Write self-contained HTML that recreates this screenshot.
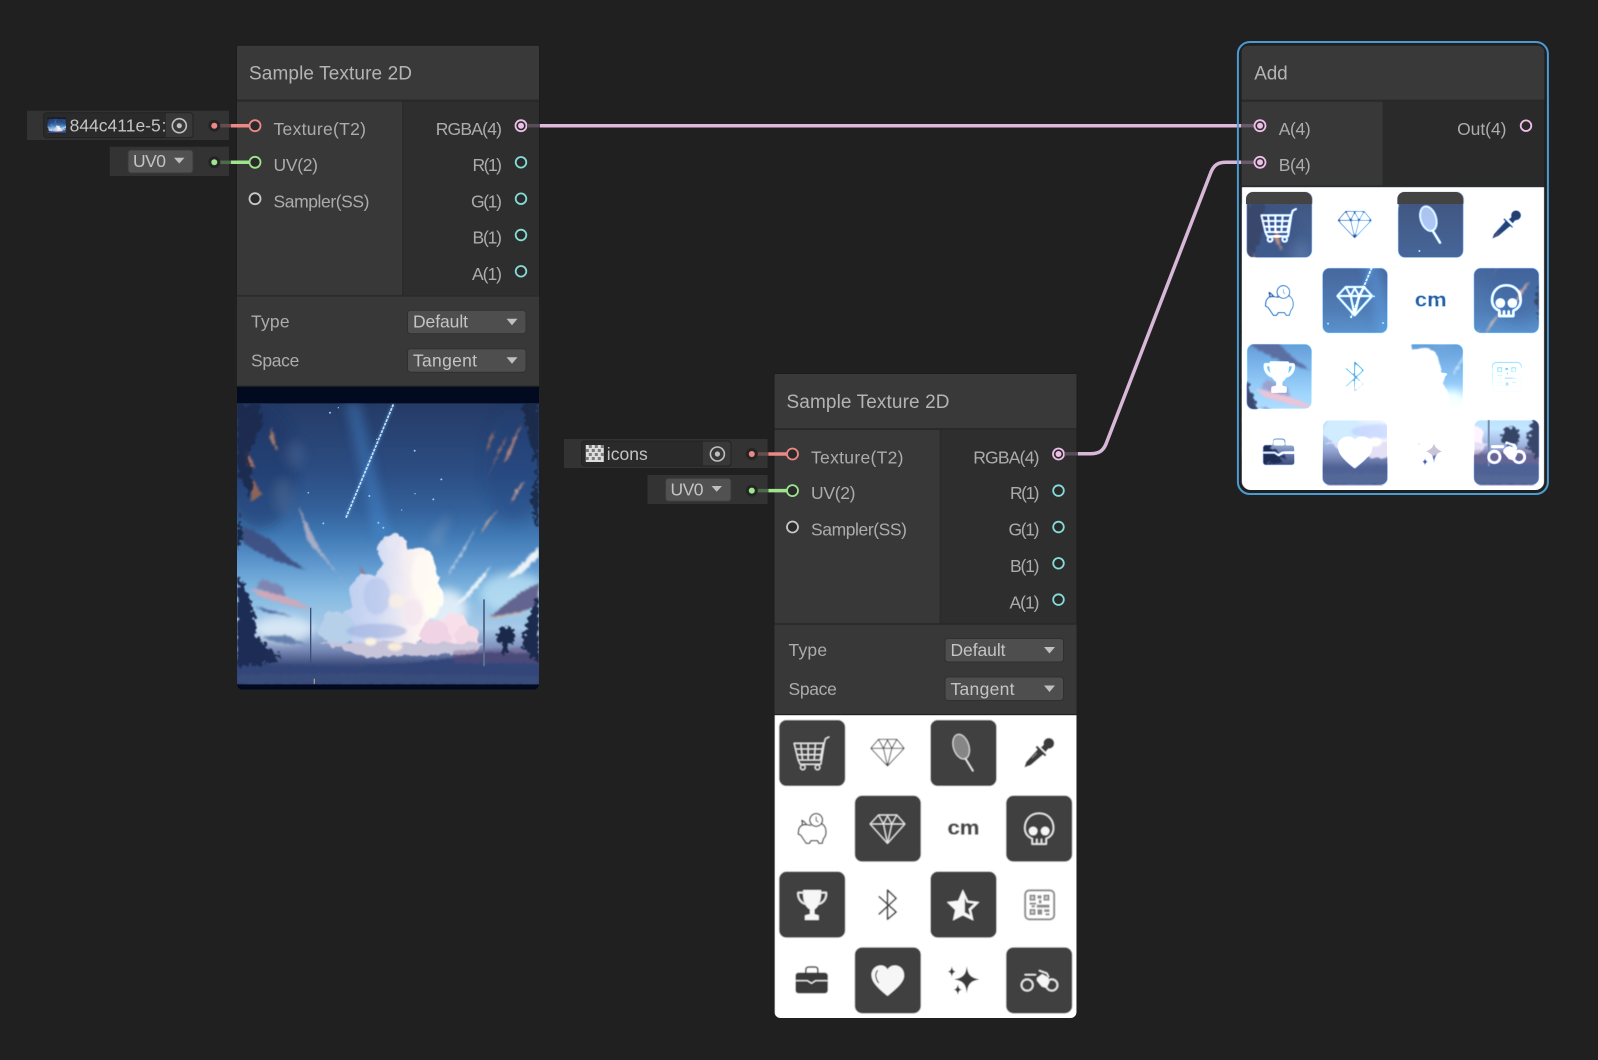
<!DOCTYPE html>
<html><head><meta charset="utf-8"><title>Shader Graph</title>
<style>
html,body{margin:0;padding:0;background:#202020;width:1598px;height:1060px;overflow:hidden}
svg{display:block}
text{font-family:"Liberation Sans",sans-serif;font-size:17.5px;fill:#acacac}
.t{font-size:19px;fill:#b4b4b4}
.v{fill:#c4c4c4}
.ik{fill:none;stroke:var(--ink);stroke-width:calc(4px*var(--k));stroke-linejoin:round;stroke-linecap:round}
.ik3{fill:none;stroke:var(--ink);stroke-width:calc(3px*var(--k));stroke-linejoin:round;stroke-linecap:round}
.ik5{fill:none;stroke:var(--ink);stroke-width:calc(5px*var(--k));stroke-linejoin:round;stroke-linecap:round}
.iw{fill:none;stroke:#e8e8e8;stroke-width:4;stroke-linejoin:round;stroke-linecap:round}
.sw{fill:#f6f6f6}
.sk{fill:var(--ink)}
.tile{fill:var(--tile)}
</style></head><body>
<svg width="1598" height="1060" viewBox="0 0 1598 1060" xmlns="http://www.w3.org/2000/svg">
<defs>
<linearGradient id="sg" x1="0" y1="72" x2="0" y2="915" gradientUnits="userSpaceOnUse">
<stop offset="0" stop-color="#253b66"/><stop offset=".25" stop-color="#2c4e84"/><stop offset=".38" stop-color="#34619a"/><stop offset=".47" stop-color="#4079b4"/><stop offset=".57" stop-color="#5d97ce"/><stop offset=".68" stop-color="#84bae2"/><stop offset=".8" stop-color="#a8cae8"/><stop offset=".88" stop-color="#7686b4"/><stop offset=".93" stop-color="#3d4e7e"/><stop offset="1" stop-color="#2c3b62"/>
</linearGradient>
<linearGradient id="cg" x1="320" y1="0" x2="670" y2="0" gradientUnits="userSpaceOnUse"><stop offset="0" stop-color="#b4c8ec"/><stop offset=".4" stop-color="#cdd8f4"/><stop offset=".75" stop-color="#fbf2f2"/><stop offset="1" stop-color="#fffdf6"/></linearGradient>
<filter id="b1" x="-10%" y="-10%" width="120%" height="120%"><feGaussianBlur stdDeviation="4"/></filter>
<filter id="b2" filterUnits="userSpaceOnUse" x="51" y="72" width="906" height="843"><feGaussianBlur stdDeviation="14"/></filter>
<filter id="b3"><feGaussianBlur stdDeviation=".4"/></filter>
<filter id="rough" color-interpolation-filters="sRGB" filterUnits="userSpaceOnUse" x="51" y="72" width="906" height="843"><feTurbulence type="fractalNoise" baseFrequency=".035" numOctaves="3" seed="4"/><feDisplacementMap in="SourceGraphic" scale="22" xChannelSelector="R" yChannelSelector="G"/><feGaussianBlur stdDeviation="2.5"/></filter>
<filter id="fol" color-interpolation-filters="sRGB" filterUnits="userSpaceOnUse" x="51" y="72" width="906" height="843"><feTurbulence type="fractalNoise" baseFrequency=".07" numOctaves="2" seed="9"/><feDisplacementMap in="SourceGraphic" scale="34" xChannelSelector="R" yChannelSelector="G"/><feGaussianBlur stdDeviation="2.5"/></filter>
<filter id="str" color-interpolation-filters="sRGB" filterUnits="userSpaceOnUse" x="51" y="72" width="906" height="843"><feTurbulence type="fractalNoise" baseFrequency=".1" numOctaves="2" seed="3"/><feDisplacementMap in="SourceGraphic" scale="12" xChannelSelector="R" yChannelSelector="G"/><feGaussianBlur stdDeviation="3"/></filter>
<clipPath id="c1"><path d="M0 0H302V297a6 6 0 0 1-6 6H6a6 6 0 0 1-6-6Z"/></clipPath>
<clipPath id="cA"><path d="M0 0H302.6V294a9 9 0 0 1-9 9H9a9 9 0 0 1-9-9Z"/></clipPath>

<g id="sky"><g transform="scale(.33333) translate(-51,-22)">
<rect x="51" y="22" width="906" height="909" fill="#020a20"/>
<rect x="51" y="72" width="906" height="843" fill="url(#sg)"/>
<g filter="url(#b2)">
<ellipse cx="120" cy="260" rx="110" ry="190" fill="#1c3060" opacity=".4"/>
<ellipse cx="880" cy="260" rx="90" ry="170" fill="#24407a" opacity=".3"/>
<path d="M375 72H420L510 470H465Z" fill="#4d9dea" opacity=".32"/>
<path d="M620 480L690 400 660 510Z" fill="#88a0c4" opacity=".4"/>
<ellipse cx="225" cy="225" rx="28" ry="38" fill="#5573a0" opacity=".35"/>
<ellipse cx="190" cy="350" rx="25" ry="50" fill="#6f88aa" opacity=".3"/>
<ellipse cx="190" cy="750" rx="90" ry="40" fill="#e2eef8" opacity=".8"/>
<ellipse cx="880" cy="640" rx="100" ry="60" fill="#c2e6f6" opacity=".7"/>
<circle cx="680" cy="690" r="60" fill="#fff" opacity=".7"/>
</g>
<g filter="url(#str)">
<path d="M70 440L150 480 200 530 258 572 170 545 90 505 62 480Z" fill="#3d4c7e" opacity=".9"/>
<path d="M92 628L160 640 230 665 275 692 190 672 120 652Z" fill="#cfa8ba"/>
<path d="M108 625L125 598 155 610 190 622 195 650 150 640Z" fill="#7f86b2"/>
<path d="M105 680L220 712 130 696Z" fill="#47609a"/>
<path d="M125 772L200 768 262 797 170 790Z" fill="#6480ac"/>
<path d="M810 712L850 680 900 640 957 610V680L900 698Z" fill="#63648f"/>
<path d="M800 715L920 695 900 702 820 717Z" fill="#d8b0a0"/>
<path d="M905 135L865 240 850 250 880 175Z" fill="#c08a80" opacity=".9"/>
<path d="M862 170L800 300 815 265 845 195Z" fill="#b4806f" opacity=".9"/>
<path d="M828 150L800 225 806 180Z" fill="#a87868" opacity=".8"/>
<path d="M915 305L872 372 892 325Z" fill="#cfa094"/>
<path d="M835 390L780 465 800 425Z" fill="#dcae96"/>
<path d="M815 555L700 685 748 650 790 600Z" fill="#eaf4fa"/>
<path d="M957 500L860 598 905 582 957 530Z" fill="#ecf2f6"/>
<path d="M770 440L680 590 695 575 735 510Z" fill="#ccd8e8" opacity=".8"/>
<path d="M236 380L300 510 388 632 345 575 262 485Z" fill="#c8bcc8" opacity=".75"/>
<path d="M420 560L455 615 428 590Z" fill="#a86a70"/>
<path d="M155 145L172 215 148 175Z" fill="#a67a68"/>
<path d="M75 205L105 262 78 265Z" fill="#a67060"/>
<path d="M95 295L128 345 92 365Z" fill="#8f6458"/>
</g>
<g filter="url(#rough)">
<g fill="url(#cg)">
<circle cx="518" cy="512" r="46"/><circle cx="592" cy="558" r="56"/><circle cx="560" cy="620" r="100"/><circle cx="622" cy="650" r="48"/><circle cx="448" cy="645" r="62"/><circle cx="520" cy="710" r="110"/><circle cx="420" cy="735" r="58"/>
</g>
<circle cx="350" cy="748" r="52" fill="#b6d0ea"/>
<circle cx="700" cy="750" r="48" fill="#f8e0ea"/><circle cx="740" cy="772" r="36" fill="#f2d8e4"/><circle cx="645" cy="770" r="46" fill="#f0d4e6"/>
<path d="M300 790H790L760 825 440 832Z" fill="#c8c4da"/>
</g>
<g filter="url(#b1)">
<ellipse cx="470" cy="650" rx="40" ry="55" fill="#a8bce6" opacity=".45"/>
<ellipse cx="470" cy="755" rx="90" ry="22" fill="#98aadc" opacity=".5"/>
<ellipse cx="610" cy="590" rx="35" ry="70" fill="#fffaf2" opacity=".8"/>
<ellipse cx="635" cy="670" rx="24" ry="48" fill="#fffdf2"/>
<ellipse cx="530" cy="665" rx="24" ry="22" fill="#f8eee6" opacity=".9"/>
<ellipse cx="580" cy="700" rx="28" ry="40" fill="#f4e6ee" opacity=".8"/>
<ellipse cx="452" cy="787" rx="18" ry="12" fill="#fbf2de"/>
<ellipse cx="525" cy="802" rx="22" ry="13" fill="#f8ecdc"/>
<ellipse cx="520" cy="495" rx="22" ry="18" fill="#e6e6f4" opacity=".9"/>
</g>
<g filter="url(#str)">
<path d="M51 848L170 858 400 862 600 850 800 818 957 822V915H51Z" fill="#33467a"/>
<path d="M51 885L400 882 957 890V915H51Z" fill="#394d7c"/>
<path d="M700 815L900 805 957 820V852H700Z" fill="#6f5078" opacity=".4"/>
</g>
<g filter="url(#fol)">
<path d="M51 72H115L130 130 95 200 85 240 100 310 88 360 65 300 51 290Z" fill="#1c2a4c" opacity=".9"/>
<path d="M51 395L66 470 51 515Z" fill="#1b2a4c"/>
<path d="M51 585C85 620 105 690 108 770L175 840 120 858H51Z" fill="#1d2c54"/>
<path d="M905 72H957V440L945 440 935 350 950 265 925 160Z" fill="#1b2947" opacity=".9"/>
<path d="M957 655C925 685 912 745 910 805L957 855Z" fill="#1b2a4d"/>
<circle cx="858" cy="770" r="28" fill="#1a284a"/><rect x="851" y="780" width="12" height="42" fill="#1a284a"/>
<path d="M135 830L155 805 185 840Z" fill="#1e2e55"/>
</g>
<path d="M272 685V850" stroke="#3a5078" stroke-width="4"/>
<path d="M792 660V860" stroke="#5a6f90" stroke-width="6"/>
<path d="M283 898V914" stroke="#d8b89c" stroke-width="4" opacity=".7"/>
<path d="M520 75L378 415" stroke="#5aa8f0" stroke-width="10" opacity=".4" filter="url(#b1)"/>
<path d="M520 75L378 415" stroke="#d6eeff" stroke-width="5" stroke-dasharray="9 3" opacity=".9"/>
<g fill="#8fcfff"><circle cx="584" cy="214" r="3"/><circle cx="664" cy="300" r="3"/><circle cx="640" cy="360" r="3"/><circle cx="310" cy="432" r="3"/><circle cx="265" cy="340" r="2.500"/><circle cx="470" cy="180" r="2"/><circle cx="330" cy="100" r="3"/><circle cx="355" cy="85" r="2"/><circle cx="585" cy="343" r="2"/><circle cx="545" cy="392" r="2"/><circle cx="448" cy="350" r="3"/><circle cx="475" cy="430" r="3"/><circle cx="490" cy="445" r="3"/></g>
</g></g>

<g id="icons"><g transform="scale(.33333) translate(-13,-15)">
<rect x="13" y="15" width="908" height="912" fill="#fff"/>
<g class="tile">
<rect x="27" y="30" width="198" height="198" rx="22"/><rect x="481" y="30" width="198" height="198" rx="22"/>
<rect x="254" y="257" width="198" height="198" rx="22"/><rect x="708" y="257" width="198" height="198" rx="22"/>
<rect x="27" y="485" width="198" height="198" rx="22"/><rect x="481" y="485" width="198" height="198" rx="22"/>
<rect x="254" y="712" width="198" height="198" rx="22"/><rect x="708" y="712" width="198" height="198" rx="22"/>
</g>
<!-- cart -->
<path class="iw" d="M72 100H160L150 150H84ZM92 100L97 150M114 100V150M136 100L132 150M76 117H157M80 134H153M84 150L90 163H152L162 100 166 86 176 81"/>
<circle class="iw" cx="98" cy="172" r="7"/><circle class="iw" cx="142" cy="172" r="7"/>
<!-- diamond 1 -->
<path class="ik3" d="M302 115L325 88H380L402 115L352 168ZM302 115H402M325 88L340 115 352 168 365 115 380 88M340 115L352 90 365 115"/>
<!-- racket -->
<g transform="rotate(-18 573 110)"><ellipse cx="573" cy="110" rx="23" ry="38" fill="#868686"/><ellipse class="iw" cx="573" cy="110" rx="23" ry="38" style="stroke-width:3.500;stroke:#d8d8d8"/></g>
<path class="iw" style="stroke-width:5" d="M586 146L608 182"/>
<!-- dropper -->
<path class="sk" d="M763 172L768 156 805 115 822 131 782 165Z"/>
<path class="sk" d="M801 107L829 135 824 139 796 112Z"/>
<path class="sk" d="M812 112L826 100 838 112 826 126Z"/>
<circle class="sk" cx="836" cy="100" r="16"/>
<path d="M785 144L800 129" stroke="#b8b8b8" stroke-width="3" style="stroke:var(--qr)" fill="none"/>
<!-- piggy -->
<path class="ik" d="M121 346C105 342 100 344 97 345L95 331C100 332 104 337 108 342M97 345C90 348 88 352 86 357L84 372 92 376 100 388 108 400H118L122 392H142L146 400H156L160 386C168 378 170 365 165 352 162 346 158 343 155 341"/>
<circle class="ik" cx="138" cy="330" r="19"/><path class="ik3" d="M138 321V332L144 336"/>
<!-- diamond 2 -->
<path class="iw" style="stroke-width:3.500" d="M300 342L325 315H380L404 342L352 400ZM300 342H404M325 315L340 342 352 400 365 342 380 315M340 342L352 318 365 342"/>
<!-- cm -->
<text x="532" y="374" textLength="96" lengthAdjust="spacingAndGlyphs" style="font-size:60px;font-weight:700;fill:var(--cm);stroke:var(--cm);stroke-width:var(--cms)">cm</text>
<!-- skull -->
<path class="iw" style="stroke-width:5" d="M807 310C780 310 764 330 764 354 764 370 772 380 786 386V402H828V386C842 380 850 370 850 354 850 330 834 310 807 310ZM800 388V402M814 388V402"/>
<circle class="sw" cx="789" cy="363" r="13"/><circle class="sw" cx="825" cy="363" r="13"/>
<!-- trophy -->
<path class="sw" d="M99 540H153C155 570 145 592 133 598V612L146 616V630H104V616L119 612V598C106 592 96 570 99 540Z"/>
<path class="iw" style="stroke-width:6" d="M100 548H84C82 565 92 578 106 582M152 548H168C170 565 160 578 146 582"/>
<!-- bluetooth -->
<path class="ik5" d="M327 560L378 606 352 628V540L378 565 327 612"/>
<!-- star -->
<path class="sw" d="M578 538L594 572 628 576 603 600 610 632 578 616 548 632 555 600 530 576 564 572Z"/>
<path style="fill:var(--tile)" d="M584 564L590 578 612 581 595 597 600 616 584 607Z"/>
<!-- qr -->
<rect x="765" y="541" width="87" height="87" rx="13" fill="none" style="stroke:var(--qr)" stroke-width="6"/>
<g style="fill:var(--qr)"><rect x="778" y="554" width="18" height="18"/><rect x="820" y="554" width="18" height="18"/><rect x="778" y="597" width="18" height="18"/><rect x="802" y="556" width="12" height="10"/><rect x="806" y="570" width="8" height="10"/><rect x="778" y="578" width="20" height="6"/><rect x="784" y="586" width="10" height="6"/><rect x="800" y="584" width="38" height="9"/><rect x="802" y="598" width="14" height="16"/><rect x="822" y="598" width="16" height="8"/><rect x="826" y="610" width="12" height="6"/></g>
<g fill="#fff" opacity=".6"><rect x="783" y="559" width="8" height="8"/><rect x="825" y="559" width="8" height="8"/><rect x="783" y="602" width="8" height="8"/></g>
<!-- case -->
<path class="ik5" d="M107 790V780C107 774 110 771 116 771H134C140 771 143 774 143 780V790"/>
<rect class="sk" x="76" y="788" width="97" height="62" rx="9"/>
<path d="M76 812H112L124 820 136 812H173" stroke="#fff" stroke-width="3.500" fill="none"/>
<!-- heart -->
<path class="sw" d="M352 858C320 832 304 815 304 795 304 775 320 766 332 766 342 766 348 771 352 778 357 771 364 766 374 766 388 766 402 776 402 796 402 815 384 832 352 858Z"/>
<path d="M322 782C315 790 315 805 325 818" style="stroke:var(--tile)" stroke-width="3.500" fill="none" stroke-linecap="round"/>
<!-- sparkle -->
<path class="sk" d="M590 768C593 793 600 803 628 808 600 813 593 823 590 850 587 823 580 813 552 808 580 803 587 793 590 768Z"/>
<path class="sk" d="M545 768C546 778 550 784 558 785 550 786 546 792 545 802 544 792 540 786 532 785 540 784 544 778 545 768Z"/>
<path class="sk" d="M563 822C564 832 568 838 576 839 568 840 564 846 563 856 562 846 558 840 550 839 558 838 562 832 563 822Z"/>
<!-- moto -->
<circle class="iw" style="stroke-width:5.500" cx="771" cy="825" r="17"/><circle class="iw" style="stroke-width:5.500" cx="845" cy="825" r="17"/>
<path class="sw" d="M800 804L816 792 834 802 838 816 829 834 815 830 800 812Z"/>
<path class="iw" style="stroke-width:5" d="M765 794H796M808 782L830 790 835 800"/>
</g></g>
</defs>

<rect width="1598" height="1060" fill="#202020"/>

<!-- main wires -->
<path d="M540 125.700H1241" stroke="#dfbadb" stroke-width="3.500" fill="none"/>
<path d="M1078 453.700H1090C1099 453.700 1103 451 1106 444L1211 172C1214 165 1218 162.300 1226 162.300H1241" stroke="#d8b8d8" stroke-width="3.500" fill="none"/>

<!-- NODE 1 -->
<g transform="translate(237,45.700)">
<rect x="-1" y="-1" width="304" height="251" fill="#1c1c1c"/>
<rect width="302" height="54" fill="#393939"/>
<rect y="54" width="302" height="2" fill="#2a2a2a"/>
<rect y="56" width="165" height="193.300" fill="#383838"/>
<rect x="165" y="56" width="2" height="193.300" fill="#2b2b2b"/>
<rect x="167" y="56" width="135" height="193.300" fill="#2e2e2e"/>
<rect y="249.300" width="302" height="2" fill="#2b2b2b"/>
<rect y="251" width="302" height="89" fill="#383838"/>
<rect x="170.500" y="264.500" width="118.500" height="23.500" rx="3" fill="#4e4e4e" stroke="#303030"/>
<rect x="170.500" y="303" width="118.500" height="23.500" rx="3" fill="#4e4e4e" stroke="#303030"/>
<path d="M269.500 273H280.500L275 279.500Z" fill="#c0c0c0"/><path d="M269.500 311.500H280.500L275 318Z" fill="#c0c0c0"/>
<text class="t" x="12" y="34" textLength="163">Sample Texture 2D</text>
<text x="36.500" y="89.300" textLength="92.500">Texture(T2)</text>
<text x="36.500" y="125.200" textLength="44.500">UV(2)</text>
<text x="36.500" y="161.600" textLength="96">Sampler(SS)</text>
<text x="198.700" y="89.300" textLength="66.300">RGBA(4)</text>
<text x="235.500" y="125.200" textLength="29.500">R(1)</text>
<text x="234" y="161.600" textLength="31">G(1)</text>
<text x="235.500" y="198" textLength="29.500">B(1)</text>
<text x="235" y="234.400" textLength="30">A(1)</text>
<text x="14" y="282" textLength="38.600">Type</text>
<text x="14" y="321" textLength="48.300">Space</text>
<text class="v" x="176" y="282" textLength="55">Default</text>
<text class="v" x="176" y="321" textLength="64">Tangent</text>
<g transform="translate(0,341)">
<g clip-path="url(#c1)"><use href="#sky"/></g>
</g>
</g>

<!-- NODE 1 inputs -->
<rect x="27" y="110.700" width="202" height="29.300" fill="#333"/>
<rect x="109.700" y="146.700" width="119.300" height="29.300" fill="#333"/>
<rect x="43.600" y="112.700" width="149.400" height="25" rx="3" fill="#2a2a2a" stroke="#232323"/>
<path d="M166 113.300H190a2.500 2.500 0 0 1 2.500 2.500V134.700a2.500 2.500 0 0 1-2.500 2.500H166Z" fill="#383838"/>
<g transform="translate(47.500,117.700) scale(.0613,.0512)"><use href="#sky"/></g>
<text class="v" x="69.600" y="131.700">844c411e-5</text>
<text class="v" x="161.500" y="131.700">:</text>
<circle cx="179.300" cy="125.700" r="7" fill="none" stroke="#c0c0c0" stroke-width="1.600"/><circle cx="179.300" cy="125.700" r="2.600" fill="#c0c0c0"/>
<rect x="128" y="150" width="65" height="23" rx="3" fill="#515151" stroke="#3a3a3a"/>
<text class="v" x="133" y="167" textLength="33">UV0</text>
<path d="M174 157.700H184.500L179.200 163.500Z" fill="#c0c0c0"/>
<g fill="none" stroke-width="3.500">
<path d="M219 125.700H231" stroke="#6b4c4c"/><path d="M231 125.700H250" stroke="#ee8886"/>
<path d="M219 162.300H231" stroke="#4e6a48"/><path d="M231 162.300H250" stroke="#9ee58c"/>
</g>
<circle cx="214.300" cy="125.700" r="6" fill="#242424"/><circle cx="214.300" cy="125.700" r="3" fill="#ee8886"/>
<circle cx="214.300" cy="162.300" r="6" fill="#242424"/><circle cx="214.300" cy="162.300" r="3" fill="#9ee58c"/>
<g stroke-width="1.800" fill="#2a2a2a">
<circle cx="255" cy="125.700" r="5.500" stroke="#ee8886"/>
<circle cx="255" cy="162.300" r="5.500" stroke="#9ee58c"/>
<circle cx="255" cy="198.700" r="5.500" stroke="#c8c8c8"/>
<circle cx="521" cy="162.300" r="5.300" stroke="#84ddd8"/><circle cx="521" cy="198.700" r="5.300" stroke="#84ddd8"/><circle cx="521" cy="235" r="5.300" stroke="#84ddd8"/><circle cx="521" cy="271.300" r="5.300" stroke="#84ddd8"/>
<circle cx="521" cy="125.700" r="5.500" stroke="#eebfe6"/>
</g>
<circle cx="521" cy="125.700" r="3" fill="#eebfe6"/>
<path d="M527 125.700H540" stroke="#5a4c5a" stroke-width="3.500"/>

<!-- NODE 2 -->
<g transform="translate(774.500,374)">
<rect x="-1" y="-1" width="304" height="251" fill="#1c1c1c"/>
<rect width="302" height="54" fill="#393939"/>
<rect y="54" width="302" height="2" fill="#2a2a2a"/>
<rect y="56" width="165" height="193.300" fill="#383838"/>
<rect x="165" y="56" width="2" height="193.300" fill="#2b2b2b"/>
<rect x="167" y="56" width="135" height="193.300" fill="#2e2e2e"/>
<rect y="249.300" width="302" height="2" fill="#2b2b2b"/>
<rect y="251" width="302" height="89" fill="#383838"/>
<rect x="170.500" y="264.500" width="118.500" height="23.500" rx="3" fill="#4e4e4e" stroke="#303030"/>
<rect x="170.500" y="303" width="118.500" height="23.500" rx="3" fill="#4e4e4e" stroke="#303030"/>
<path d="M269.500 273H280.500L275 279.500Z" fill="#c0c0c0"/><path d="M269.500 311.500H280.500L275 318Z" fill="#c0c0c0"/>
<text class="t" x="12" y="34" textLength="163">Sample Texture 2D</text>
<text x="36.500" y="89.300" textLength="92.500">Texture(T2)</text>
<text x="36.500" y="125.200" textLength="44.500">UV(2)</text>
<text x="36.500" y="161.600" textLength="96">Sampler(SS)</text>
<text x="198.700" y="89.300" textLength="66.300">RGBA(4)</text>
<text x="235.500" y="125.200" textLength="29.500">R(1)</text>
<text x="234" y="161.600" textLength="31">G(1)</text>
<text x="235.500" y="198" textLength="29.500">B(1)</text>
<text x="235" y="234.400" textLength="30">A(1)</text>
<text x="14" y="282" textLength="38.600">Type</text>
<text x="14" y="321" textLength="48.300">Space</text>
<text class="v" x="176" y="282" textLength="55">Default</text>
<text class="v" x="176" y="321" textLength="64">Tangent</text>
<g transform="translate(0,341)" style="--tile:#404040;--ink:#3a3a3a;--cm:#484848;--cms:1px;--k:.95;--qr:#8c8c8c">
<g clip-path="url(#c1)"><use href="#icons" filter="url(#b3)"/></g>
</g>
</g>

<!-- NODE 2 inputs -->
<rect x="564" y="439" width="203.500" height="29" fill="#333"/>
<rect x="647.500" y="475" width="120" height="29" fill="#333"/>
<rect x="581.500" y="441" width="149.500" height="25" rx="3" fill="#2a2a2a" stroke="#232323"/>
<path d="M703 441.600H728a2.500 2.500 0 0 1 2.500 2.500V463a2.500 2.500 0 0 1-2.500 2.500H703Z" fill="#383838"/>
<g transform="translate(585.800,445)">
<rect width="18" height="17" fill="#ddd"/>
<g fill="#7a7a7a"><rect x="3" y="0" width="3" height="3"/><rect x="9" y="0" width="3" height="3"/><rect x="15" y="0" width="3" height="3"/><rect x="0" y="4" width="3" height="3"/><rect x="6" y="4" width="3" height="3"/><rect x="12" y="4" width="3" height="3"/><rect x="3" y="8" width="3" height="3"/><rect x="9" y="8" width="3" height="3"/><rect x="15" y="8" width="3" height="3"/><rect x="0" y="12" width="3" height="3"/><rect x="6" y="12" width="3" height="3"/><rect x="12" y="12" width="3" height="3"/></g>
</g>
<text class="v" x="606.800" y="460" textLength="41">icons</text>
<circle cx="717.400" cy="454" r="7" fill="none" stroke="#c0c0c0" stroke-width="1.600"/><circle cx="717.400" cy="454" r="2.600" fill="#c0c0c0"/>
<rect x="665.500" y="478.300" width="65.500" height="23" rx="3" fill="#515151" stroke="#3a3a3a"/>
<text class="v" x="670.500" y="495.300" textLength="33">UV0</text>
<path d="M711.500 486H722L716.700 491.800Z" fill="#c0c0c0"/>
<g fill="none" stroke-width="3.500">
<path d="M757 454H768.500" stroke="#6b4c4c"/><path d="M768.500 454H787.500" stroke="#ee8886"/>
<path d="M757 490.600H768.500" stroke="#4e6a48"/><path d="M768.500 490.600H787.500" stroke="#9ee58c"/>
</g>
<circle cx="751.800" cy="454" r="6" fill="#242424"/><circle cx="751.800" cy="454" r="3" fill="#ee8886"/>
<circle cx="751.800" cy="490.600" r="6" fill="#242424"/><circle cx="751.800" cy="490.600" r="3" fill="#9ee58c"/>
<g stroke-width="1.800" fill="#2a2a2a">
<circle cx="792.500" cy="454" r="5.500" stroke="#ee8886"/>
<circle cx="792.500" cy="490.600" r="5.500" stroke="#9ee58c"/>
<circle cx="792.500" cy="527" r="5.500" stroke="#c8c8c8"/>
<circle cx="1058.500" cy="490.600" r="5.300" stroke="#84ddd8"/><circle cx="1058.500" cy="527" r="5.300" stroke="#84ddd8"/><circle cx="1058.500" cy="563.300" r="5.300" stroke="#84ddd8"/><circle cx="1058.500" cy="599.600" r="5.300" stroke="#84ddd8"/>
<circle cx="1058.500" cy="454" r="5.500" stroke="#eebfe6"/>
</g>
<circle cx="1058.500" cy="454" r="3" fill="#eebfe6"/>
<path d="M1064.500 453.800H1078" stroke="#5a4c5a" stroke-width="3.500"/>

<!-- ADD NODE -->
<g transform="translate(1241.700,45.700)">
<path d="M6 0H296.600a6 6 0 0 1 6 6V54H0V6a6 6 0 0 1 6-6Z" fill="#393939"/>
<rect y="54" width="302.600" height="2" fill="#2a2a2a"/>
<rect y="56" width="141" height="85" fill="#383838"/>
<rect x="141" y="56" width="2" height="85" fill="#2b2b2b"/>
<rect x="143" y="56" width="159.600" height="85" fill="#2a2a2a"/>
<rect y="139.700" width="302.600" height="1.600" fill="#2b2b2b"/>
<text class="t" x="12.600" y="34" textLength="33.400">Add</text>
<text x="37" y="89.300" textLength="32">A(4)</text>
<text x="37" y="125.200" textLength="32">B(4)</text>
<text x="215.400" y="89.300" textLength="49.400">Out(4)</text>
<g transform="translate(0,141.300)">
<g clip-path="url(#cA)" style="isolation:isolate;--tile:#1a1a1a;--ink:#000;--cm:#000;--cms:3px;--k:1.500;--qr:#080808">
<use href="#sky"/>
<g style="mix-blend-mode:plus-lighter"><use href="#icons" filter="url(#b3)"/></g>
</g>
<path d="M4.300 17V12a7 7 0 0 1 7-7H63a7 7 0 0 1 7 7V17ZM155.700 17V12a7 7 0 0 1 7-7H214a7 7 0 0 1 7 7V17Z" fill="#434343"/>
</g>
</g>
<rect x="1237.900" y="42" width="310" height="452" rx="12" fill="none" stroke="#4a9bd4" stroke-width="2"/>
<path d="M1241 125.700H1255" stroke="#6a5a6a" stroke-width="3.500"/>
<path d="M1241 162.300H1255" stroke="#6a5a6a" stroke-width="3.500"/>
<g stroke="#eebfe6" stroke-width="1.800" fill="#2e2e2e">
<circle cx="1260" cy="125.700" r="5.500"/><circle cx="1260" cy="162.300" r="5.500"/><circle cx="1526" cy="125.700" r="5.300" fill="#2a2a2a"/>
</g>
<circle cx="1260" cy="125.700" r="3" fill="#eebfe6"/><circle cx="1260" cy="162.300" r="3" fill="#eebfe6"/>
</svg>
</body></html>
